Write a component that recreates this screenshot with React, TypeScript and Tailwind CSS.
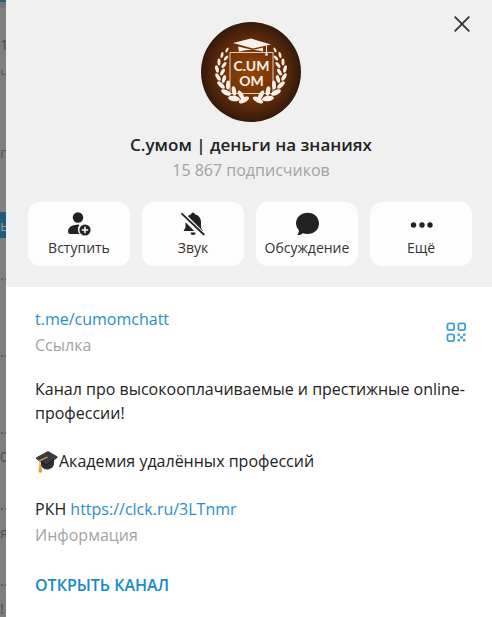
import React from "react";
import clsx from "clsx";

interface StripItem {
  text: string;
  className: string;
}

interface ActionItem {
  label: string;
  icon: React.ReactNode;
}

interface Leaf {
  x: number;
  y: number;
  angle: number;
  size: number;
}

// the chat list that stays visible behind the panel
const stripItems: StripItem[] = [
  { text: "1", className: "mt-6 h-6 text-[#4d4d4d]" },
  { text: "ч", className: "mt-1 h-6 text-[#4d5c68]" },
  { text: "г", className: "mt-14 h-6 text-[#4d5c68]" },
  { text: "ь", className: "mt-12 h-[26px] bg-[#20597a] text-[#8c9ba5]" },
  { text: "..2", className: "mt-6 h-6 text-[#4d4d4d]" },
  { text: "..2", className: "mt-[53px] h-6 text-[#4d4d4d]" },
  { text: "..2", className: "mt-[53px] h-6 text-[#4d4d4d]" },
  { text: "0", className: "mt-1 h-6 text-[#4d4d4d]" },
  { text: "..2", className: "mt-6 h-6 text-[#4d4d4d]" },
  { text: "я", className: "mt-1 h-6 text-[#4d4d4d]" },
  { text: "..2", className: "mt-6 h-6 text-[#4d4d4d]" },
  { text: "!", className: "mt-1 h-6 text-[#4d4d4d]" },
];

const leaves: Leaf[] = [
  { x: 26, y: 28, angle: 28, size: 2.6 },
  { x: 21, y: 33, angle: 15, size: 3 },
  { x: 25, y: 36, angle: 42, size: 3 },
  { x: 18, y: 40, angle: 0, size: 3.4 },
  { x: 23, y: 43, angle: 38, size: 3.4 },
  { x: 16, y: 47, angle: -14, size: 3.8 },
  { x: 21.5, y: 50, angle: 28, size: 3.8 },
  { x: 17, y: 55, angle: -30, size: 4.2 },
  { x: 23, y: 57, angle: 16, size: 4 },
  { x: 20, y: 63, angle: -45, size: 4.8 },
  { x: 27, y: 63, angle: 4, size: 4.4 },
  { x: 25, y: 70.5, angle: -62, size: 5.4 },
  { x: 33, y: 69, angle: -10, size: 4.8 },
  { x: 33, y: 76.5, angle: -80, size: 6 },
  { x: 40, y: 73, angle: -28, size: 5 },
  { x: 43, y: 78, angle: -118, size: 5.6 },
];

function Branch() {
  return (
    <>
      {leaves.map((leaf, index) => (
        <ellipse
          key={index}
          rx={leaf.size * 0.45}
          ry={leaf.size}
          transform={`translate(${leaf.x} ${leaf.y}) rotate(${leaf.angle})`}
        />
      ))}
    </>
  );
}

function Avatar() {
  return (
    <svg viewBox="0 0 100 100" className="size-[100px]" role="img" aria-label="С.умом">
      <defs>
        <radialGradient id="avatar-bg">
          <stop offset="0" stopColor="#954505" />
          <stop offset="0.5" stopColor="#743307" />
          <stop offset="1" stopColor="#34190c" />
        </radialGradient>
      </defs>
      <circle cx="50" cy="50" r="50" fill="url(#avatar-bg)" />
      <rect x="29" y="30.5" width="43" height="41" fill="none" stroke="#e3cdbb" strokeWidth="1" />
      <g fill="#f8f1ea">
        <Branch />
        <g transform="translate(100 0) scale(-1 1)">
          <Branch />
        </g>
        <path d="M32 21 50 16.5 70 22.5 52 26.500Z" />
        <path d="M37 24.5 52 28 62 25.5V29.5Q50 26 38 29.800Z" />
        <path d="M65 23.5h1v6l1 4h-3l1-4Z" />
      </g>
      <g
        fill="#f8f1ea"
        textAnchor="middle"
        fontFamily="Lato, sans-serif"
        fontSize="14"
        fontWeight="700"
      >
        <text x="50.5" y="49">C.UM</text>
        <text x="50.5" y="64">OM</text>
      </g>
    </svg>
  );
}

const actions: ActionItem[] = [
  {
    label: "Вступить",
    icon: (
      <svg viewBox="0 0 24 24" className="size-6" fill="#222">
        <circle cx="11" cy="5.5" r="5.2" />
        <path d="M12.5 13a6.8 6.8 0 0 0 .1 9H3.2Q1 22 1 19.8 1 13 11 12.5Z" />
        <circle cx="18" cy="18" r="5.6" />
        <path d="M18 14.8v6.4M14.8 18h6.4" stroke="#fff" strokeWidth="1.5" />
      </svg>
    ),
  },
  {
    label: "Звук",
    icon: (
      <svg viewBox="0 0 24 24" className="size-6" fill="#222">
        <path d="M12 .5a1.8 1.8 0 0 1 1.8 1.7C17.5 3 20 6 20 10v5.5L22 19H2.5L4.5 15.5V10C4.5 6 7 3 10.2 2.2A1.8 1.8 0 0 1 12 .5Z" />
        <path d="M9.6 20.5h5a2.5 2.5 0 0 1-5 0Z" />
        <path d="M0 1.5 22 23.5" stroke="#fff" strokeWidth="6" />
        <path d="M1 1.8 22.8 22.5" stroke="#222" strokeWidth="1.8" strokeLinecap="round" />
      </svg>
    ),
  },
  {
    label: "Обсуждение",
    icon: (
      <svg viewBox="0 0 24 24" className="size-6" fill="#222">
        <path d="M12.7.8C19.2.8 24 5.3 24 11.5S19.2 22 12.7 22q-2.7 0-4.7-.8Q6 23.2 2.2 23.2 3.8 21.3 4 18.5 1 15.7 1 11.5C1 5.3 6.2.8 12.7.8Z" />
      </svg>
    ),
  },
  {
    label: "Ещё",
    icon: (
      <svg viewBox="0 0 24 24" className="size-6" fill="#222">
        <circle cx="4.5" cy="13" r="2.7" />
        <circle cx="13" cy="13" r="2.7" />
        <circle cx="21" cy="13" r="2.7" />
      </svg>
    ),
  },
];

function QrIcon() {
  return (
    <svg viewBox="0 0 20 20" className="size-5">
      <g fill="none" stroke="#3f9fd5" strokeWidth="1.8">
        <rect x="1.4" y="1.4" width="6.7" height="6.7" rx="1.8" />
        <rect x="12.4" y="1.4" width="6.7" height="6.7" rx="1.8" />
        <rect x="1.4" y="12.4" width="6.7" height="6.7" rx="1.8" />
      </g>
      <g fill="#3f9fd5">
        <rect x="11.5" y="11.5" width="2.4" height="2.4" />
        <rect x="17" y="11.5" width="2.4" height="2.4" />
        <rect x="14.2" y="14.2" width="2.6" height="2.6" />
        <rect x="11.5" y="17" width="2.4" height="2.4" />
        <rect x="17" y="17" width="2.4" height="2.4" />
      </g>
    </svg>
  );
}

function CapIcon() {
  return (
    <svg viewBox="0 0 24 24" className="size-6 shrink-0" role="img" aria-label="🎓">
      <path d="M6 11v6q3 4 7 3.5 5-1 6-5V9Z" fill="#302f35" />
      <path d="M1 8.5 13 2l9.5 5.5L11 15.5Z" fill="#3c3b40" />
      <path d="M1 8.5 11 15.5 22.5 7.5V8.7L11 17 1 9.7Z" fill="#202024" />
      <path d="M12.5 8 5 11.5V17" fill="none" stroke="#e5a13c" strokeWidth="1.2" />
      <path d="M4.3 16h1.8l1.1 7q-2 1.3-3.8 0Z" fill="#e5a13c" />
    </svg>
  );
}

function Strip() {
  return (
    <div
      aria-hidden="true"
      className="h-screen w-1.5 shrink-0 overflow-hidden bg-[#7f7f7f] text-[15px]"
    >
      <div className="h-2 border-t-2 border-[#1d6674] bg-[#777]" />
      {stripItems.map((item, index) => (
        <div key={index} className={clsx("flex items-center", item.className)}>
          {item.text}
        </div>
      ))}
    </div>
  );
}

function App() {
  return (
    <div className="flex min-h-screen bg-white font-['Open_Sans','Noto_Sans',sans-serif] text-base leading-6 text-[#222]">
      <Strip />
      <main className="min-w-0 flex-1">
        <header className="relative flex flex-col items-center bg-[#f0f0f0] pt-[22px] pr-[18px] pb-[21px] pl-[22px]">
          <button
            type="button"
            aria-label="Закрыть"
            className="absolute top-3 right-[18px] flex size-6 items-center justify-center"
          >
            <svg viewBox="0 0 16 16" className="size-4" stroke="#333" strokeWidth="1.8">
              <path d="M.7.7 15.3 15.3M15.3.7.7 15.3" />
            </svg>
          </button>
          <Avatar />
          <h1 className="mt-[11px] text-[17px] leading-6 font-semibold">
            С.умом | деньги на знаниях
          </h1>
          <p className="mt-px text-[#a3a3a3]">15 867 подписчиков</p>
          <div className="mt-5 grid w-full grid-cols-4 gap-3 pr-0.5">
            {actions.map((action) => (
              <button
                key={action.label}
                type="button"
                className="flex h-16 flex-col items-center rounded-xl bg-[#fdfdfd] pt-2.5 text-sm leading-6 text-[#333]"
              >
                {action.icon}
                <span>{action.label}</span>
              </button>
            ))}
          </div>
        </header>

        <section className="pt-5 pr-[26px] pl-[29px]">
          <div className="flex items-center justify-between">
            <div>
              <a href="#link" className="block text-[#2b8ecb]">
                t.me/cumomchatt
              </a>
              <p className="mt-0.5 text-[#a3a3a3]">Ссылка</p>
            </div>
            <button type="button" aria-label="QR-код">
              <QrIcon />
            </button>
          </div>

          <div className="mt-5">
            <p>Канал про высокооплачиваемые и престижные online-профессии!</p>
            <p className="mt-6 flex items-center">
              <CapIcon />
              Академия удалённых профессий
            </p>
            <p className="mt-6">
              РКН{" "}
              <a href="#rkn" className="text-[#2b8ecb]">
                https://clck.ru/3LTnmr
              </a>
            </p>
            <p className="mt-0.5 text-[#a3a3a3]">Информация</p>
          </div>

          <button type="button" className="mt-[26px] font-semibold text-[#168acd]">
            ОТКРЫТЬ КАНАЛ
          </button>
        </section>
      </main>
    </div>
  );
}

export default App;
